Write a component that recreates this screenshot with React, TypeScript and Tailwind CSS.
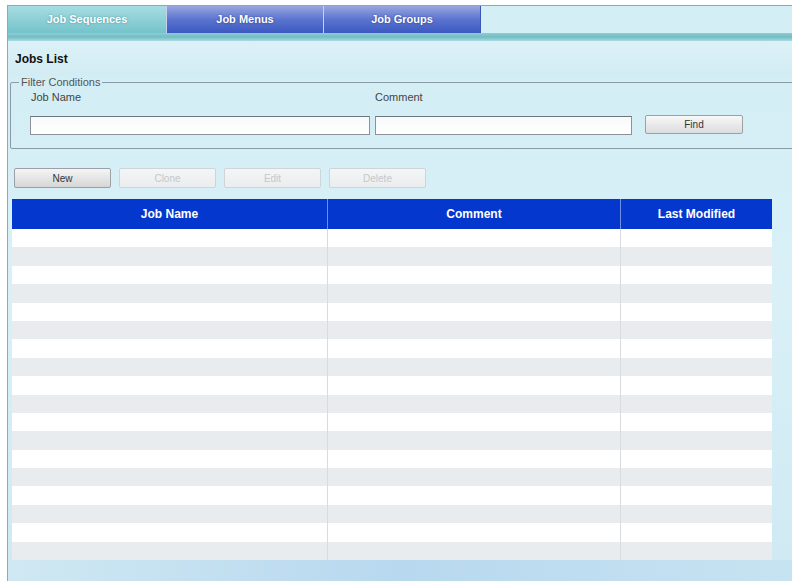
import React from 'react'

const tabs = [
  { label: 'Job Sequences', active: true },
  { label: 'Job Menus', active: false },
  { label: 'Job Groups', active: false },
]

const actions = [
  { label: 'New', enabled: true },
  { label: 'Clone', enabled: false },
  { label: 'Edit', enabled: false },
  { label: 'Delete', enabled: false },
]

export default function App() {
  const rows = Array.from({ length: 18 })

  return (
    <div
      className="w-[792px] h-[581px] bg-white overflow-hidden pl-[7px] pt-[5px]"
      style={{ fontFamily: '"Liberation Sans", Arial, sans-serif' }}
    >
      <div className="w-[785px] h-[576px] border-t border-l border-[#9aa4ab] bg-gradient-to-b from-[#d2edf5] via-[#d9f0f7] to-[#cfe9f3] flex flex-col">

        {/* ================= TABS ================= */}
        <div className="flex h-[27px] bg-[#d4eef6]">
          {tabs.map((t) =>
            t.active ? (
              <div
                key={t.label}
                className="w-[158px] flex items-center justify-center text-[11px] font-bold text-white bg-gradient-to-b from-[#a6dde2] to-[#74c3cb] [text-shadow:0_0_2px_rgba(0,80,100,0.5)]"
              >
                {t.label}
              </div>
            ) : (
              <div
                key={t.label}
                className="w-[157px] flex items-center justify-center text-[11px] font-bold text-white bg-gradient-to-b from-[#98a6e0] via-[#5b74cf] to-[#3c58c2] border-l border-[#c8d0ee] [text-shadow:0_0_2px_rgba(0,0,80,0.5)]"
              >
                {t.label}
              </div>
            )
          )}
          <div className="flex-1 border-l border-[#3a56b8]" />
        </div>
        <div className="h-[8px] bg-gradient-to-b from-[#8fcdd4] via-[#72bcc4] to-[#a9dbe1]" />

        {/* ================= TITLE ================= */}
        <div className="h-[35px] flex items-center pl-[7px] text-[12px] font-bold text-[#111] bg-gradient-to-b from-[#dcf1f7] to-[#d2ecf4]">
          Jobs List
        </div>

        {/* ================= FILTER ================= */}
        <fieldset className="ml-[2px] mr-[-4px] border border-[#8a9aa6] rounded-[2px] px-[19px] pt-0 pb-0 h-[73px]">
          <legend className="text-[11px] text-[#555] px-[2px] ml-[-11px] leading-[12px]">Filter Conditions</legend>
          <div className="flex items-end mt-[2px]">
            <div className="flex flex-col w-[345px]">
              <span className="text-[11px] text-[#444] pl-[1px] leading-[14px]">Job Name</span>
              <div className="mt-[12px] h-[19px] w-[340px] bg-gradient-to-b from-[#f7f9fa] to-white border border-[#8b9299] border-t-[#6e757c]" />
            </div>
            <div className="flex flex-col w-[270px]">
              <span className="text-[11px] text-[#444] leading-[14px]">Comment</span>
              <div className="mt-[12px] h-[19px] w-[257px] bg-gradient-to-b from-[#f7f9fa] to-white border border-[#8b9299] border-t-[#6e757c]" />
            </div>
            <button className="h-[19px] w-[98px] mb-[1px] text-[10px] text-[#333] border border-[#9aa0a6] rounded-[2px] bg-gradient-to-b from-[#f8f8f8] to-[#dcdcdc]">
              Find
            </button>
          </div>
        </fieldset>

        {/* ================= ACTIONS ================= */}
        <div className="flex gap-[8px] pl-[6px] mt-[19px]">
          {actions.map((a) => (
            <button
              key={a.label}
              className={`h-[20px] w-[97px] text-[10px] rounded-[2px] border ${
                a.enabled
                  ? 'text-[#333] border-[#9aa0a6] bg-gradient-to-b from-[#f5f5f5] to-[#d6d6d6]'
                  : 'text-[#c4c8cc] border-[#cfd4d8] bg-gradient-to-b from-[#f3f5f6] to-[#eaeced]'
              }`}
            >
              {a.label}
            </button>
          ))}
        </div>

        {/* ================= TABLE ================= */}
        <div className="ml-[4px] mt-[11px] w-[760px]">
          <div className="flex h-[30px] bg-[#0437cd] text-white text-[12px] font-bold">
            <div className="w-[315px] flex items-center justify-center">Job Name</div>
            <div className="w-[293px] flex items-center justify-center border-l border-[#6f8fe8]">Comment</div>
            <div className="flex-1 flex items-center justify-center border-l border-[#6f8fe8]">Last Modified</div>
          </div>
          {rows.map((_, i) => (
            <div
              key={i}
              className={`flex h-[18.4px] ${i % 2 === 0 ? 'bg-white' : 'bg-[#e8ecee]'}`}
            >
              <div className="w-[315px]" />
              <div className="w-[293px] border-l border-[#d8dcdf]" />
              <div className="flex-1 border-l border-[#d8dcdf]" />
            </div>
          ))}
        </div>

        {/* ================= FOOTER ================= */}
        <div className="flex-1 bg-gradient-to-r from-[#cfe8f2] via-[#b8d8ef] to-[#c6e3f1]" />
      </div>
    </div>
  )
}
